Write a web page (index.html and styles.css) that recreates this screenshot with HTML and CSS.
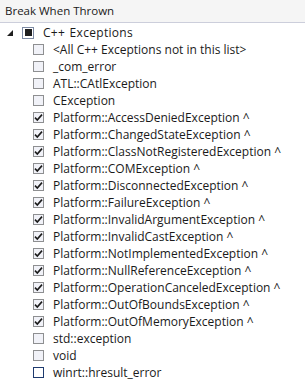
FILE: index.html
```html
<!DOCTYPE html>
<html>
<head>
    <title>Break When Thrown</title>
    <link rel="stylesheet" href="styles.css">
</head>
<body>
    <div class="panel">
        <div class="header">Break When Thrown</div>
        <div class="tree" id="tree">
            <div class="row parent">
                <span class="twisty"></span>
                <span class="box mixed"><span class="fill"></span></span>
                <span class="label">C++ Exceptions</span>
            </div>
        </div>
    </div>

    <script>
        // exception list: [name, checked]
        const exceptions = [
            ["<All C++ Exceptions not in this list>", false],
            ["_com_error", false],
            ["ATL::CAtlException", false],
            ["CException", false],
            ["Platform::AccessDeniedException ^", true],
            ["Platform::ChangedStateException ^", true],
            ["Platform::ClassNotRegisteredException ^", true],
            ["Platform::COMException ^", true],
            ["Platform::DisconnectedException ^", true],
            ["Platform::FailureException ^", true],
            ["Platform::InvalidArgumentException ^", true],
            ["Platform::InvalidCastException ^", true],
            ["Platform::NotImplementedException ^", true],
            ["Platform::NullReferenceException ^", true],
            ["Platform::OperationCanceledException ^", true],
            ["Platform::OutOfBoundsException ^", true],
            ["Platform::OutOfMemoryException ^", true],
            ["std::exception", false],
            ["void", false],
            ["winrt::hresult_error", false]
        ];

        const tick = '<svg width="9" height="9" viewBox="0 0 9 9"><path d="M1 4.6 L3.3 7 L8 1.6" fill="none" stroke="#1b1b1b" stroke-width="1.6"/></svg>';

        function buildTree() {
            const tree = document.getElementById('tree');
            exceptions.forEach(([name, checked], i) => {
                const row = document.createElement('div');
                row.className = 'row child';
                const box = document.createElement('span');
                box.className = 'box' + (i === exceptions.length - 1 ? ' focus' : '');
                if (checked) box.innerHTML = tick;
                const label = document.createElement('span');
                label.className = 'label';
                label.textContent = name;
                row.appendChild(box);
                row.appendChild(label);
                tree.appendChild(row);
            });
        }

        buildTree();
    </script>
</body>
</html>
```

FILE: styles.css
```css
body {
    margin: 0;
    background: #ffffff;
    font-family: "Segoe UI", "Open Sans", "Liberation Sans", sans-serif;
    font-size: 12px;
    color: #1a1a1a;
}

.panel {
    width: 305px;
    height: 380px;
    overflow: hidden;
}

.header {
    height: 22px;
    line-height: 21px;
    padding-left: 5px;
    font-size: 11.5px;
    background: #f5f5f5;
    border-bottom: 1px solid #ccceDB;
}

.tree {
    padding-top: 1px;
}

.row {
    height: 17px;
    display: flex;
    align-items: center;
    white-space: nowrap;
}

.row.parent {
    padding-left: 7px;
}

.row.child {
    padding-left: 33px;
}

.twisty {
    width: 0;
    height: 0;
    border-left: 6px solid transparent;
    border-bottom: 6px solid #1e1e1e;
    margin-right: 9px;
    margin-top: 1px;
}

.box {
    box-sizing: border-box;
    width: 11px;
    height: 11px;
    border: 1px solid #8e8f91;
    background: #f1f2f8;
    display: flex;
    align-items: center;
    justify-content: center;
    flex-shrink: 0;
}

.box svg {
    display: block;
}

.box.mixed {
    width: 12px;
    height: 12px;
    border-color: #7d8aa3;
    background: #ffffff;
}

.box.mixed .fill {
    width: 7px;
    height: 7px;
    background: #1e1e1e;
}

.box.focus {
    border-color: #1e3a6e;
    background: #ffffff;
}

.label {
    margin-left: 9px;
}

.parent .label {
    word-spacing: 1px;
    letter-spacing: 0.3px;
}
```
